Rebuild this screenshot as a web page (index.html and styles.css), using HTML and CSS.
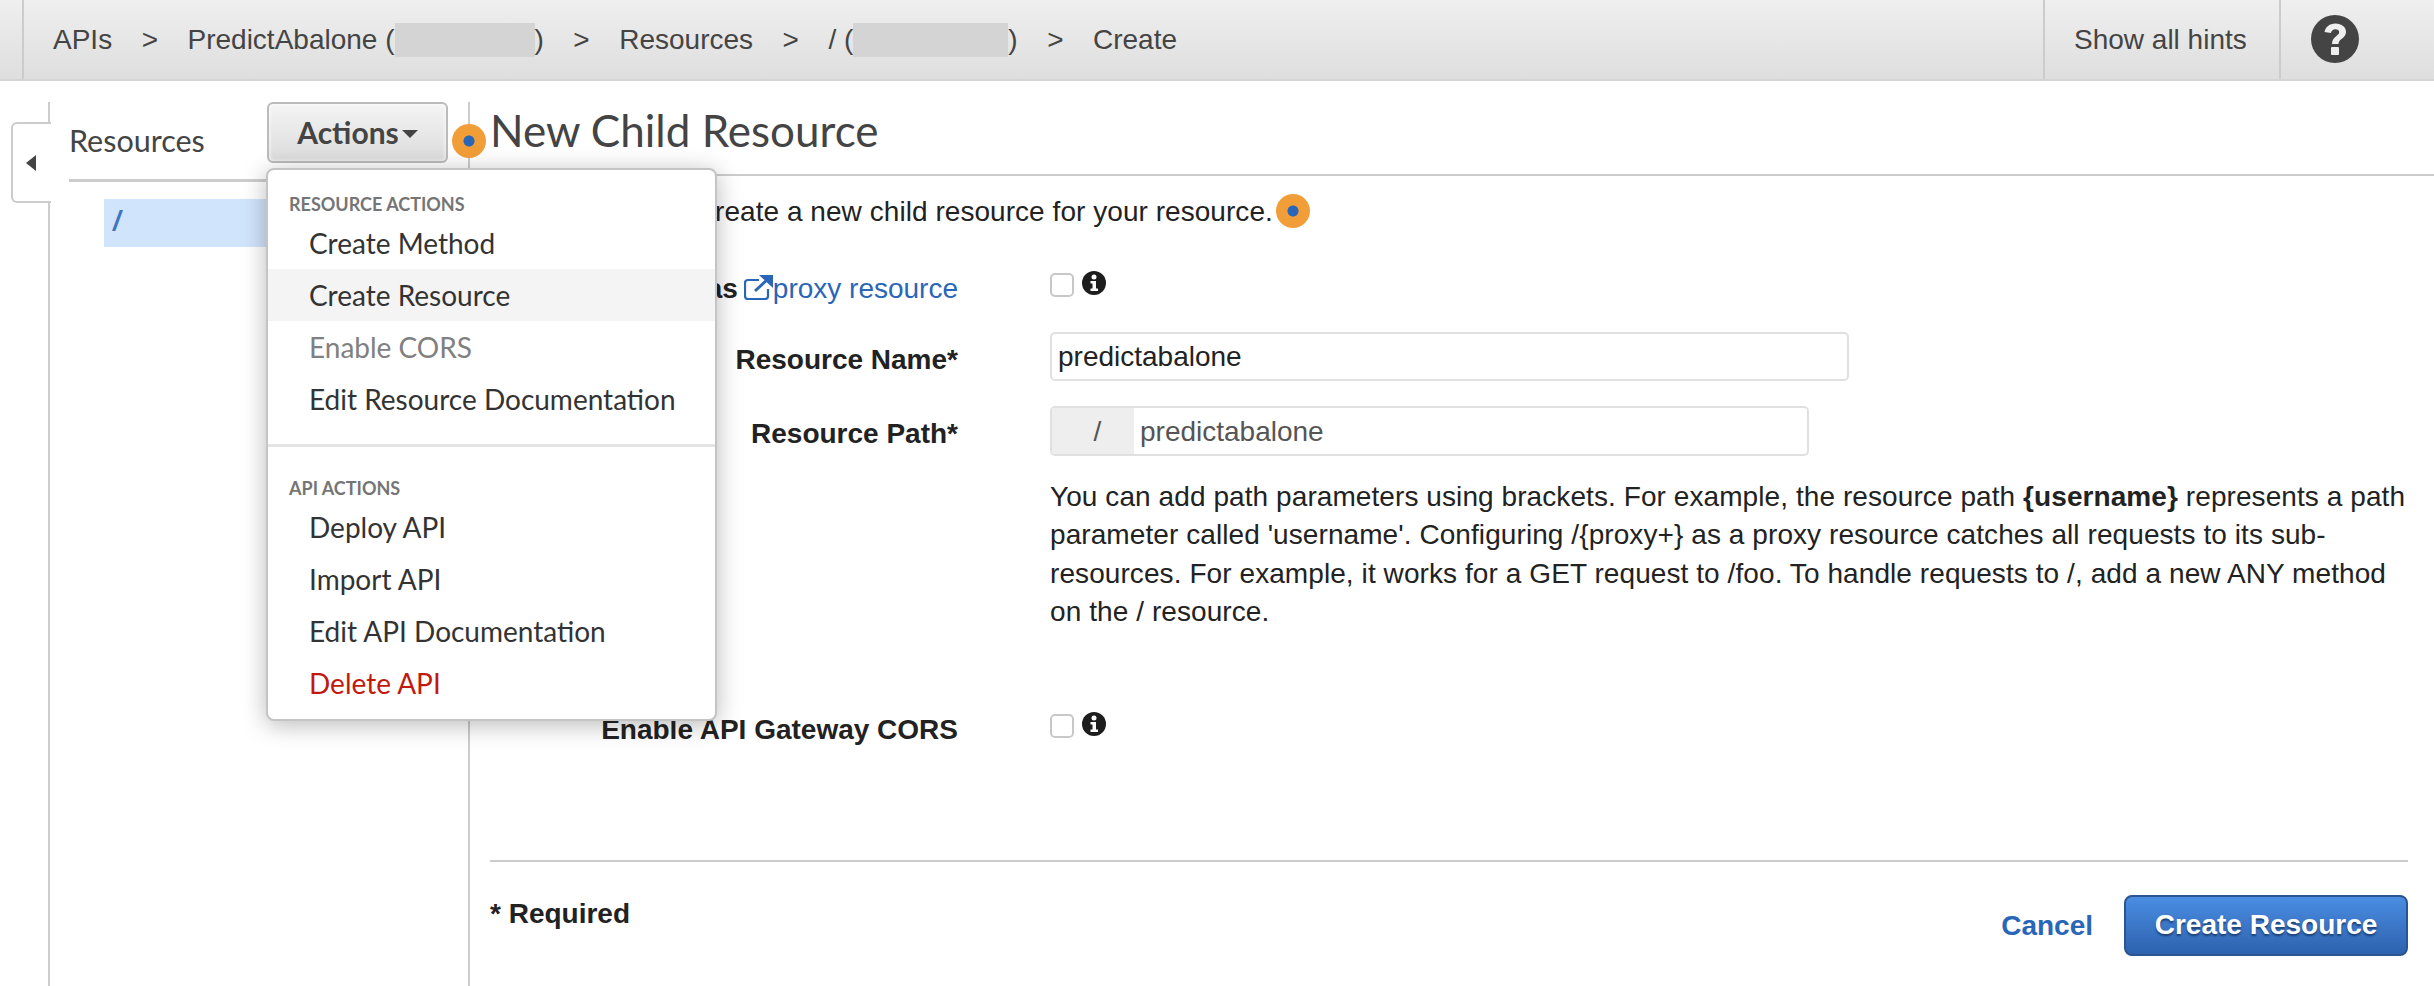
FILE: index.html
```html
<!DOCTYPE html>
<html lang="en">
<head>
    <meta charset="UTF-8">
    <title>New Child Resource</title>
    <link rel="stylesheet" href="styles.css">
</head>
<body>

<div class="topbar">
    <div class="crumbs">
        <span>APIs</span>
        <span class="sep">&gt;</span>
        <span class="crumb">PredictAbalone (<span class="blur blur-a"></span>)</span>
        <span class="sep">&gt;</span>
        <span>Resources</span>
        <span class="sep">&gt;</span>
        <span class="crumb">/ (<span class="blur blur-b"></span>)</span>
        <span class="sep">&gt;</span>
        <span>Create</span>
    </div>
    <div class="show-hints">Show all hints</div>
    <div class="help">
        <svg width="48" height="48" viewBox="0 0 48 48">
            <circle cx="24" cy="24" r="24" fill="#444"/>
            <path d="M13.500 17c1-5 5-8.500 11-8.500 6.200 0 10.500 3.600 10.500 8.300 0 6.700-7.500 6.900-7.500 12.200h-6.500c0-7.700 7.200-8 7.200-11.800 0-1.700-1.600-3-3.800-3-2.300 0-3.800 1.300-4.600 3.800z" fill="#eee"/>
            <rect x="20" y="32" width="8" height="8" rx="1" fill="#eee"/>
        </svg>
    </div>
</div>

<div class="workspace">
    <div class="sidebar">
        <div class="collapse-tab"><span class="arrow-left"></span></div>
        <div class="side-head">
            <span class="side-title">Resources</span>
            <button class="actions-btn">Actions<span class="caret"></span></button>
        </div>
        <div class="tree-row"><span class="tree-item">/</span></div>
        <span class="hint-dot hint-actions"></span>

        <div class="menu">
            <div class="menu-head">RESOURCE ACTIONS</div>
            <div class="menu-item">Create Method</div>
            <div class="menu-item active">Create Resource</div>
            <div class="menu-item disabled">Enable CORS</div>
            <div class="menu-item">Edit Resource Documentation</div>
            <div class="menu-divider"></div>
            <div class="menu-head">API ACTIONS</div>
            <div class="menu-item">Deploy API</div>
            <div class="menu-item">Import API</div>
            <div class="menu-item">Edit API Documentation</div>
            <div class="menu-item danger">Delete API</div>
        </div>
    </div>

    <div class="content">
        <h1 class="page-title">New Child Resource</h1>
        <p class="intro">Use this page to create a new child resource for your resource.<span class="hint-dot hint-inline"></span></p>

        <div class="form-row row-proxy">
            <div class="form-label plain">
                <b>Configure as</b>
                <svg class="ext-icon" width="29" height="25" viewBox="0 0 29 25" fill="none" stroke="#2a66b8" stroke-width="2.200">
                    <path d="M24 14v7a3 3 0 0 1-3 3H4a3 3 0 0 1-3-3V8a3 3 0 0 1 3-3h11"/>
                    <path d="M11 16 24 4" stroke-width="3"/>
                    <path d="M15 0h14v13z" fill="#2a66b8" stroke="none"/>
                </svg><a class="link">proxy resource</a>
            </div>
            <div class="check-wrap">
                <span class="check"></span>
                <svg class="info" width="24" height="24" viewBox="0 0 24 24">
                    <circle cx="12" cy="12" r="12" fill="#1d1d1d"/>
                    <circle cx="12" cy="6" r="2.500" fill="#fff"/>
                    <path d="M8.500 10h5.500v7.500h2V20H8.500v-2.500h2V12.500h-2z" fill="#fff"/>
                </svg>
            </div>
        </div>

        <div class="form-row row-name">
            <div class="form-label">Resource Name*</div>
            <div class="text-input">predictabalone</div>
        </div>

        <div class="form-row row-path">
            <div class="form-label">Resource Path*</div>
            <div class="path-input">
                <span class="path-prefix">/</span>
                <span class="path-value">predictabalone</span>
            </div>
        </div>

        <div class="form-row row-note">
            <div class="form-label"></div>
            <p class="note">You can add path parameters using brackets. For example, the resource path <b>{username}</b> represents a path parameter called 'username'. Configuring /{proxy+} as a proxy resource catches all requests to its sub-resources. For example, it works for a GET request to /foo. To handle requests to /, add a new ANY method on the / resource.</p>
        </div>

        <div class="form-row row-cors">
            <div class="form-label">Enable API Gateway CORS</div>
            <div class="check-wrap">
                <span class="check"></span>
                <svg class="info" width="24" height="24" viewBox="0 0 24 24">
                    <circle cx="12" cy="12" r="12" fill="#1d1d1d"/>
                    <circle cx="12" cy="6" r="2.500" fill="#fff"/>
                    <path d="M8.500 10h5.500v7.500h2V20H8.500v-2.500h2V12.500h-2z" fill="#fff"/>
                </svg>
            </div>
        </div>

        <div class="form-foot">
            <span class="required">* Required</span>
            <a class="cancel">Cancel</a>
            <button class="primary-btn">Create Resource</button>
        </div>
    </div>
</div>

</body>
</html>
```

FILE: styles.css
```css
* {
    box-sizing: border-box;
}

body {
    margin: 0;
    height: 986px;
    overflow: hidden;
    background-color: #fff;
    font-family: "Liberation Sans", Arial, sans-serif;
    color: #222;
}

.topbar {
    display: flex;
    height: 81px;
    background: linear-gradient(#efefef, #dedede);
    border-bottom: 2px solid #d4d4d4;
    font-size: 28px;
    color: #444;
}

.crumbs {
    display: flex;
    align-items: center;
    margin-left: 22px;
    padding-left: 29px;
    border-left: 2px solid #ccc;
}

.crumb {
    display: flex;
    align-items: center;
}

.sep {
    margin: 0 29.500px;
}

.blur {
    display: inline-block;
    height: 34px;
    background-color: #d4d4d4;
}

.blur-a {
    width: 140px;
}

.blur-b {
    width: 155px;
}

.show-hints {
    display: flex;
    align-items: center;
    margin-left: auto;
    width: 236px;
    padding-left: 29px;
    border-left: 2px solid #ccc;
}

.help {
    display: flex;
    align-items: center;
    width: 155px;
    padding-left: 30px;
    padding-bottom: 2px;
    border-left: 2px solid #ccc;
}

.workspace {
    display: flex;
    height: 905px;
    padding-top: 21px;
}

.sidebar {
    position: relative;
    width: 422px;
    margin-left: 48px;
    border-left: 2px solid #ccc;
    border-right: 2px solid #ccc;
    font-family: Lato, sans-serif;
}

.collapse-tab {
    position: absolute;
    left: -39px;
    top: 20px;
    width: 40px;
    height: 81px;
    display: flex;
    align-items: center;
    padding-left: 13px;
    background-color: #fff;
    border: 2px solid #ccc;
    border-right: none;
    border-radius: 6px 0 0 6px;
}

.arrow-left {
    width: 0;
    height: 0;
    border-top: 8px solid transparent;
    border-bottom: 8px solid transparent;
    border-right: 10px solid #444;
}

.side-head {
    display: flex;
    align-items: flex-start;
    justify-content: space-between;
    height: 80px;
    margin-left: 19px;
    margin-right: 20px;
    border-bottom: 3px solid #ccc;
}

.side-title {
    margin-top: 20px;
    font-size: 30.500px;
    color: #444;
}

.actions-btn {
    display: flex;
    align-items: center;
    justify-content: center;
    width: 181px;
    height: 61px;
    padding-bottom: 2px;
    background: linear-gradient(#f4f4f4, #dcdcdc);
    border: 2px solid #bbb;
    border-radius: 6px;
    box-shadow: inset 0 0 4px #fff;
    font-family: Lato, sans-serif;
    font-size: 30px;
    font-weight: 700;
    color: #444;
}

.caret {
    margin-left: 3px;
    margin-top: 3px;
    border-top: 8px solid #444;
    border-left: 8px solid transparent;
    border-right: 8px solid transparent;
}

.tree-row {
    margin-top: 17px;
    margin-left: 54px;
}

.tree-item {
    display: block;
    height: 48px;
    width: 320px;
    padding-left: 9px;
    background-color: #d0e4fb;
    font-family: "Liberation Sans", sans-serif;
    font-size: 27px;
    font-weight: 700;
    font-style: italic;
    line-height: 44px;
    color: #3f76bd;
}

.hint-dot {
    display: inline-block;
    width: 34px;
    height: 34px;
    border-radius: 50%;
    background: radial-gradient(circle, #2a66b8 0 5px, #f29e38 6px);
}

.hint-actions {
    position: absolute;
    left: 402px;
    top: 22px;
    z-index: 2;
}

.menu {
    position: absolute;
    left: 216px;
    top: 66px;
    z-index: 3;
    width: 451px;
    height: 553px;
    padding-top: 22px;
    background-color: #fff;
    border: 2px solid #c4c4c4;
    border-radius: 8px;
    box-shadow: 0 4px 24px rgba(0, 0, 0, 0.28);
}

.menu-head {
    height: 25px;
    padding-left: 21px;
    font-size: 18px;
    font-weight: 700;
    line-height: 25px;
    color: #757575;
}

.menu-item {
    height: 52px;
    padding-left: 41px;
    font-size: 28px;
    line-height: 52px;
    color: #333;
}

.menu-item.active {
    background-color: #f4f4f4;
}

.menu-item.disabled {
    color: #808080;
}

.menu-item.danger {
    color: #c2190f;
}

.menu-divider {
    height: 3px;
    margin-top: 19px;
    margin-bottom: 29px;
    background-color: #e4e4e4;
}

.content {
    flex: 1;
    padding-left: 20px;
    padding-right: 26px;
}

.page-title {
    height: 74px;
    margin: 0 -26px 0 0;
    border-bottom: 2px solid #ccc;
    font-family: Lato, sans-serif;
    font-size: 44px;
    font-weight: 400;
    line-height: 56px;
    color: #444;
}

.intro {
    display: flex;
    align-items: center;
    height: 34px;
    margin: 19px 0 0;
    font-size: 28px;
    letter-spacing: 0.050px;
}

.hint-inline {
    flex: none;
    margin-left: 3px;
    margin-top: -2px;
}

.form-row {
    display: flex;
    align-items: flex-start;
}

.form-label {
    flex: none;
    width: 468px;
    margin-right: 92px;
    text-align: right;
    font-size: 28px;
    font-weight: 700;
    color: #222;
}

.form-label.plain {
    display: flex;
    align-items: center;
    justify-content: flex-end;
    font-weight: 400;
}

.ext-icon {
    flex: none;
    margin-left: 6px;
    margin-top: -3px;
}

.link {
    color: #2a66b8;
}

.check-wrap {
    display: flex;
    align-items: flex-start;
}

.check {
    display: block;
    width: 24px;
    height: 24px;
    border: 2px solid #c8c8c8;
    border-radius: 5px;
    background-color: #fff;
}

.info {
    margin-left: 8px;
    margin-top: -2px;
}

.row-proxy {
    margin-top: 44px;
}

.row-name {
    margin-top: 27px;
}

.row-name .form-label,
.row-path .form-label {
    height: 49px;
    line-height: 55px;
}

.text-input {
    width: 799px;
    height: 49px;
    padding-left: 6px;
    border: 2px solid #e0e0e0;
    border-radius: 5px;
    font-size: 28px;
    line-height: 46px;
    color: #222;
}

.row-path {
    margin-top: 25px;
}

.path-input {
    display: flex;
    width: 759px;
    height: 50px;
    border: 2px solid #e0e0e0;
    border-radius: 5px;
    font-size: 28px;
    line-height: 47px;
}

.path-prefix {
    width: 82px;
    padding-left: 9px;
    text-align: center;
    background-color: #eee;
    color: #555;
}

.path-value {
    padding-left: 6px;
    color: #555;
}

.row-note {
    margin-top: 22px;
}

.note {
    flex: 1;
    margin: 0;
    font-size: 28px;
    line-height: 38.400px;
    letter-spacing: 0.080px;
    color: #222;
}

.row-cors {
    margin-top: 82px;
}

.form-foot {
    display: flex;
    align-items: flex-start;
    height: 95px;
    margin-top: 114px;
    border-top: 2px solid #ccc;
}

.required {
    margin-top: 36px;
    margin-right: auto;
    font-size: 28px;
    font-weight: 700;
}

.cancel {
    margin-top: 48px;
    margin-right: 31px;
    font-size: 28px;
    font-weight: 700;
    color: #2a66b8;
}

.primary-btn {
    width: 284px;
    height: 61px;
    margin-top: 33px;
    background: linear-gradient(#4a8de2, #2d62ae);
    border: 2px solid #2a5590;
    border-radius: 8px;
    font-family: "Liberation Sans", sans-serif;
    font-size: 28px;
    font-weight: 700;
    color: #fff;
    text-shadow: 0 2px 2px #1d3f70;
}
```
